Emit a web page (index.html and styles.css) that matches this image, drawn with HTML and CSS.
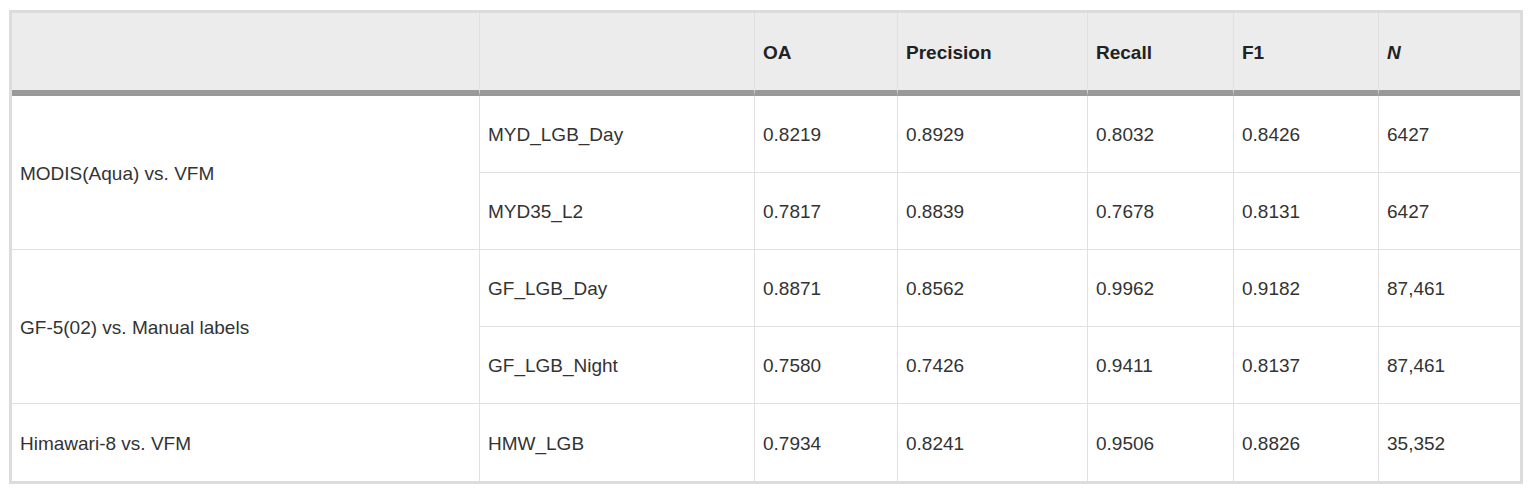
FILE: index.html
```html
<!DOCTYPE html>
<html lang="en">
<head>
<meta charset="utf-8">
<title>Cloud detection accuracy</title>
<link rel="stylesheet" href="styles.css">
</head>
<body>
<div class="wrap">
<table class="results">
  <colgroup>
    <col class="c1"><col class="c2"><col class="c3"><col class="c4"><col class="c5"><col class="c6"><col class="c7">
  </colgroup>
  <thead>
    <tr>
      <th></th>
      <th></th>
      <th>OA</th>
      <th>Precision</th>
      <th>Recall</th>
      <th>F1</th>
      <th><em>N</em></th>
    </tr>
  </thead>
  <tbody>
    <tr>
      <td rowspan="2">MODIS(Aqua) vs. VFM</td>
      <td>MYD_LGB_Day</td>
      <td>0.8219</td>
      <td>0.8929</td>
      <td>0.8032</td>
      <td>0.8426</td>
      <td>6427</td>
    </tr>
    <tr>
      <td>MYD35_L2</td>
      <td>0.7817</td>
      <td>0.8839</td>
      <td>0.7678</td>
      <td>0.8131</td>
      <td>6427</td>
    </tr>
    <tr>
      <td rowspan="2">GF-5(02) vs. Manual labels</td>
      <td>GF_LGB_Day</td>
      <td>0.8871</td>
      <td>0.8562</td>
      <td>0.9962</td>
      <td>0.9182</td>
      <td>87,461</td>
    </tr>
    <tr>
      <td>GF_LGB_Night</td>
      <td>0.7580</td>
      <td>0.7426</td>
      <td>0.9411</td>
      <td>0.8137</td>
      <td>87,461</td>
    </tr>
    <tr class="last">
      <td>Himawari-8 vs. VFM</td>
      <td>HMW_LGB</td>
      <td>0.7934</td>
      <td>0.8241</td>
      <td>0.9506</td>
      <td>0.8826</td>
      <td>35,352</td>
    </tr>
  </tbody>
</table>
</div>
</body>
</html>
```
FILE: styles.css
```css
html, body {
  margin: 0;
  padding: 0;
  background: #ffffff;
}

.wrap {
  padding: 10px 0 0 9px;
}

.results {
  width: 1514px;
  table-layout: fixed;
  border-collapse: separate;
  border-spacing: 0;
  border: 3px solid #dcdcdc;
  font-family: "Liberation Sans", Arial, Helvetica, sans-serif;
  font-size: 19px;
  color: #333333;
}

.c1 { width: 468px; }
.c2 { width: 275px; }
.c3 { width: 143px; }
.c4 { width: 190px; }
.c5 { width: 146px; }
.c6 { width: 145px; }
.c7 { width: 141px; }

.results th,
.results td {
  padding: 2px 8px 0;
  text-align: left;
  vertical-align: middle;
  border-right: 1px solid #e0e0e0;
  border-bottom: 1px solid #e0e0e0;
  white-space: nowrap;
}

.results th:last-child,
.results td:last-child {
  border-right: none;
}

.results thead th {
  background: #ececec;
  color: #222222;
  font-weight: bold;
  height: 83px;
  box-sizing: border-box;
  border-bottom: 6px solid #999999;
  padding-top: 3px;
}

.results thead em {
  font-style: italic;
}

.results tbody tr {
  height: 77px;
}

.results tbody tr.last td {
  border-bottom: none;
}
```
